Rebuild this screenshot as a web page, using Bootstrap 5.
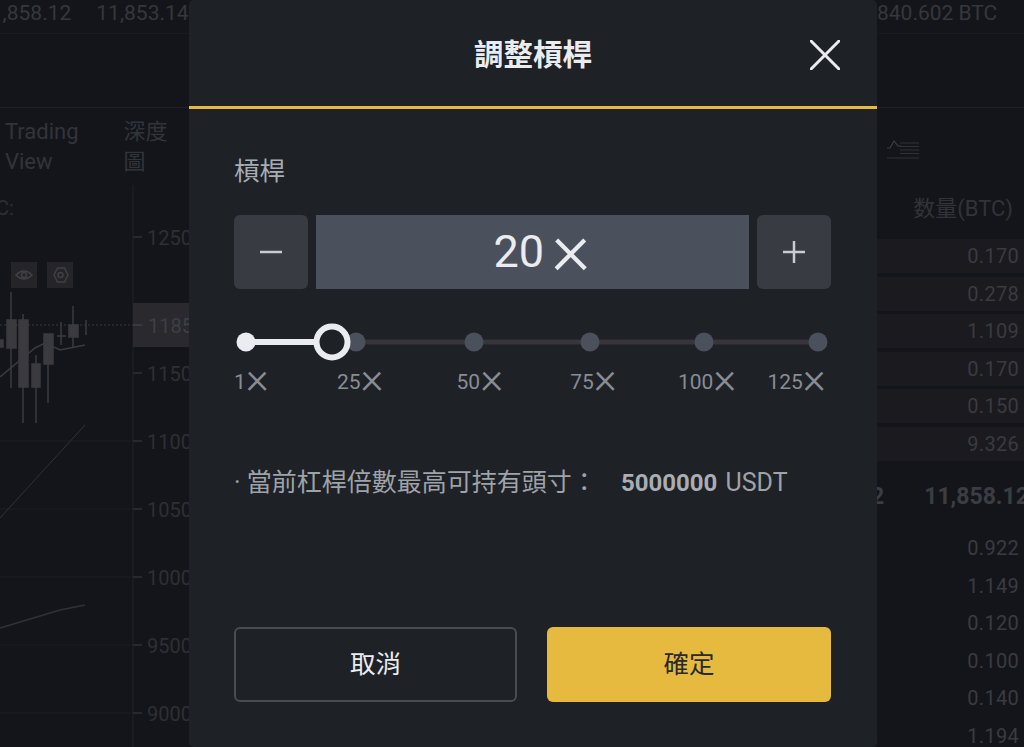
<!DOCTYPE html>
<html lang="zh-Hant">
<head>
<meta charset="utf-8">
<title>調整槓桿</title>
<link href="https://cdn.jsdelivr.net/npm/bootstrap@5.3.0/dist/css/bootstrap.min.css" rel="stylesheet">
<style>
html,body{height:747px;overflow:hidden;background:#14151a;}
body{font-family:Roboto,"Noto Sans CJK TC","Liberation Sans",sans-serif;color:#36373c;}
.stage{width:1024px;height:747px;}
.side-left{width:189px;flex:none;overflow:hidden;}
.side-right{width:147px;flex:none;overflow:hidden;}
.ticker{height:34px;font-size:21px;line-height:27px;white-space:nowrap;border-bottom:1px solid #1a1a1f;}
.ticker-left{margin-left:-21px;gap:25px;}
.spacer{height:74px;border-bottom:1px solid #211f22;}
.tabs{height:77px;padding:9px 0 0 5px;font-size:22px;line-height:30px;gap:45px;color:#333439;}
.tab-depth{width:44px;}
.chart{display:block;}
.chart text{font-family:Roboto,sans-serif;font-size:20px;fill:#2e2f34;}
.sort-wrap{height:60px;padding:28px 0 0 10px;}
.qty-head{height:71px;padding:27px 11px 0 0;font-size:22px;line-height:28px;color:#323338;text-align:right;}
.qty-row{height:37.5px;line-height:36px;font-size:20px;text-align:right;padding-right:5px;color:#3a3b41;letter-spacing:.3px;}
.qty-row-ask{background:linear-gradient(#1b1a1e 0 34px,transparent 34px);line-height:34px;}
.mid-row{height:66px;line-height:66px;font-size:23px;font-weight:700;white-space:nowrap;color:#3c3d43;}
.mid-clip{margin-left:-6px;margin-right:40px;}
.leverage-modal{width:688px;flex:none;height:747px;background:#1e2126;border-radius:5px;color:#eaecef;}
.modal-top{height:109px;border-bottom:3px solid #e6ba3f;padding:5px 0 0 0;position:relative;}
.modal-title{font-size:29.500px;font-weight:700;color:#eaecef;margin:0;line-height:1.2;}
.close-btn{position:absolute;right:37px;top:40px;padding:0;border:0;background:none;line-height:0;}
.modal-main{padding:44px 46px 0 45px;}
.field-label{font-size:25.500px;line-height:36px;color:#a8acb3;margin-bottom:26px;}
.stepper{height:74px;gap:8px;}
.step-btn{width:74px;height:74px;padding:0;background:#393b42;border:0;border-radius:6px;line-height:0;}
.lev-value{background:#4a505c;height:74px;font-size:45px;font-weight:400;color:#eaecef;flex:1;padding-left:19px;}
.lev-x{font-size:75px;font-weight:300;line-height:0;margin-left:7px;transform:translateY(-4px);}
.slider-box{height:48px;margin-top:29px;}
.slider-box svg{display:block;margin-left:-2px;}
.tick-row{height:28px;margin-top:2px;font-size:21px;line-height:28px;color:#878c95;white-space:nowrap;}
.tick-x{display:inline-block;font-size:44px;font-weight:300;line-height:0;transform:translateY(4px);}
.t2{margin-left:68px;}.t3{margin-left:73px;}.t4{margin-left:67px;}.t5{margin-left:61px;}.t6{margin-left:31px;}
.note{margin-top:71px;font-size:25px;line-height:32px;color:#9ea2a9;white-space:nowrap;}
.note b{color:#a9adb4;margin-left:18px;font-weight:700;font-size:24px;}
.note-unit{font-size:25px;margin-left:2px;}
.actions{margin-top:128px;gap:30px;}
.act-btn{height:75px;font-size:25.500px;border-radius:6px;padding:0;}
.act-cancel{width:283px;background:transparent;border:2px solid #494c53;color:#eaecef;}
.act-ok{width:284px;background:#e6ba3f;border:0;color:#2a2a2c;}
.act-cancel:hover{background:transparent;color:#eaecef;border-color:#494c53;}
.act-ok:hover{background:#e6ba3f;color:#2a2a2c;}
</style>
</head>
<body>
<div class="stage d-flex">
  <div class="side-left">
    <div class="ticker ticker-left d-flex"><span>11,858.12</span><span>11,853.14</span></div>
    <div class="spacer"></div>
    <div class="tabs d-flex"><div>Trading<br>View</div><div class="tab-depth">深度<br>圖</div></div>
    <svg class="chart" width="189" height="562" viewBox="0 185 189 562">
      <text x="-4" y="215">C:</text>
      <rect x="11" y="262" width="26" height="26" fill="#252529"/>
      <path d="M16 275q8-8 16 0q-8 8-16 0z" fill="none" stroke="#3f3f44" stroke-width="1.5"/><circle cx="24" cy="275" r="2.5" fill="none" stroke="#3f3f44" stroke-width="1.5"/>
      <rect x="47" y="262" width="26" height="26" fill="#252529"/>
      <path d="M54 275l3.500-7h7l3.500 7l-3.500 7h-7z" fill="none" stroke="#3f3f44" stroke-width="1.5"/><circle cx="60.500" cy="275" r="2.500" fill="none" stroke="#3f3f44" stroke-width="1.500"/>
      <g stroke="#1c1c21" stroke-width="1"><path d="M0 441H133M0 509H133M0 577H133M0 645H133M0 713H133"/></g>
      <path d="M133 185V747" stroke="#202025"/>
      <path d="M133 237h9M133 373h9M133 441h9M133 509h9M133 577h9M133 645h9M133 713h9" stroke="#2e2f34" stroke-width="1.500"/>
      <text x="147" y="245">12500</text><text x="147" y="381">11500</text><text x="147" y="449">11000</text><text x="147" y="517">10500</text><text x="147" y="585">10000</text><text x="147" y="653">9500</text><text x="147" y="721">9000</text>
      <rect x="133" y="303" width="56" height="44" fill="#2a292d"/>
      <path d="M133 325h9" stroke="#404045" stroke-width="1.500"/>
      <text x="148" y="333" style="fill:#3f3f44">11857</text>
      <path d="M0 325H133" stroke="#37363a" stroke-dasharray="2 2"/>
      <g fill="#3b3a3e" stroke="#3b3a3e" stroke-width="1.500">
        <path d="M11 292V388M23 314V423M36 355V423M48 334V403M73 306V347M61 322V345M86 320V335" fill="none"/>
        <rect x="7" y="320" width="9" height="28"/><rect x="19" y="320" width="9" height="67"/><rect x="32" y="364" width="8" height="23"/><rect x="44" y="334" width="9" height="30"/><rect x="69" y="325" width="9" height="12"/><rect x="0" y="340" width="3" height="7"/>
        <path d="M57 336h9" fill="none"/>
      </g>
      <path d="M0 377L35 348L45 343L60 350L85 345" fill="none" stroke="#3b3a3e" stroke-width="1.500"/>
      <path d="M0 518L85 425" fill="none" stroke="#343136"/>
      <path d="M0 628L60 610L85 605" fill="none" stroke="#323136" stroke-width="1.500"/>
    </svg>
  </div>

  <div class="leverage-modal">
    <div class="modal-top d-flex align-items-center justify-content-center">
      <h5 class="modal-title">調整槓桿</h5>
      <button class="close-btn" type="button" aria-label="Close"><svg width="30" height="30" viewBox="0 0 30 30"><path d="M1 1L29 29M29 1L1 29" stroke="#eaecef" stroke-width="3" stroke-linecap="round"/></svg></button>
    </div>
    <div class="modal-main">
      <div class="field-label">槓桿</div>
      <div class="stepper d-flex">
        <button class="step-btn btn" type="button" aria-label="minus"><svg width="24" height="24" viewBox="0 0 24 24"><path d="M1 12H23" stroke="#c9ccd1" stroke-width="2.500"/></svg></button>
        <div class="lev-value d-flex align-items-center justify-content-center">20<span class="lev-x">×</span></div>
        <button class="step-btn btn" type="button" aria-label="plus"><svg width="24" height="24" viewBox="0 0 24 24"><path d="M1 12H23M12 1V23" stroke="#c9ccd1" stroke-width="2.500"/></svg></button>
      </div>
      <div class="slider-box">
        <svg width="600" height="48" viewBox="232 318 600 48">
          <path d="M246 342H818" stroke="#37343a" stroke-width="5"/>
          <g fill="#4a505c"><circle cx="356" cy="342" r="9.500"/><circle cx="474" cy="342" r="9.500"/><circle cx="590" cy="342" r="9.500"/><circle cx="704" cy="342" r="9.500"/><circle cx="818" cy="342" r="9.500"/></g>
          <path d="M246 342H332" stroke="#eaecef" stroke-width="6"/>
          <circle cx="246" cy="342" r="9.500" fill="#eaecef"/>
          <circle cx="332" cy="342" r="15.500" fill="#1e2126" stroke="#eaecef" stroke-width="6"/>
        </svg>
      </div>
      <div class="tick-row d-flex">
        <span>1<span class="tick-x">×</span></span><span class="t2">25<span class="tick-x">×</span></span><span class="t3">50<span class="tick-x">×</span></span><span class="t4">75<span class="tick-x">×</span></span><span class="t5">100<span class="tick-x">×</span></span><span class="t6">125<span class="tick-x">×</span></span>
      </div>
      <div class="note">· 當前杠桿倍數最高可持有頭寸： <b>5000000</b> <span class="note-unit">USDT</span></div>
      <div class="actions d-flex">
        <button class="btn act-btn act-cancel" type="button">取消</button>
        <button class="btn act-btn act-ok" type="button">確定</button>
      </div>
    </div>
  </div>

  <div class="side-right">
    <div class="ticker">840.602 BTC</div>
    <div class="spacer"></div>
    <div class="sort-wrap"><svg width="32" height="20" viewBox="0 0 32 20"><path d="M0 19H32M13 4H32M13 7.500H32M13 11H32M13 14.500H32" stroke="#313237" stroke-width="1.200"/><path d="M0 9H3L7 2L11 7H14" fill="none" stroke="#3c3d42" stroke-width="1.200"/></svg></div>
    <div class="qty-head">数量(BTC)</div>
    <div class="qty-row qty-row-ask">0.170</div>
    <div class="qty-row qty-row-ask">0.278</div>
    <div class="qty-row qty-row-ask">1.109</div>
    <div class="qty-row qty-row-ask">0.170</div>
    <div class="qty-row qty-row-ask">0.150</div>
    <div class="qty-row qty-row-ask">9.326</div>
    <div class="mid-row d-flex"><span class="mid-clip">2</span><span>11,858.12</span></div>
    <div class="qty-row">0.922</div>
    <div class="qty-row">1.149</div>
    <div class="qty-row">0.120</div>
    <div class="qty-row">0.100</div>
    <div class="qty-row">0.140</div>
    <div class="qty-row">1.194</div>
  </div>
</div>
<script src="https://cdn.jsdelivr.net/npm/bootstrap@5.3.0/dist/js/bootstrap.bundle.min.js"></script>
</body>
</html>
